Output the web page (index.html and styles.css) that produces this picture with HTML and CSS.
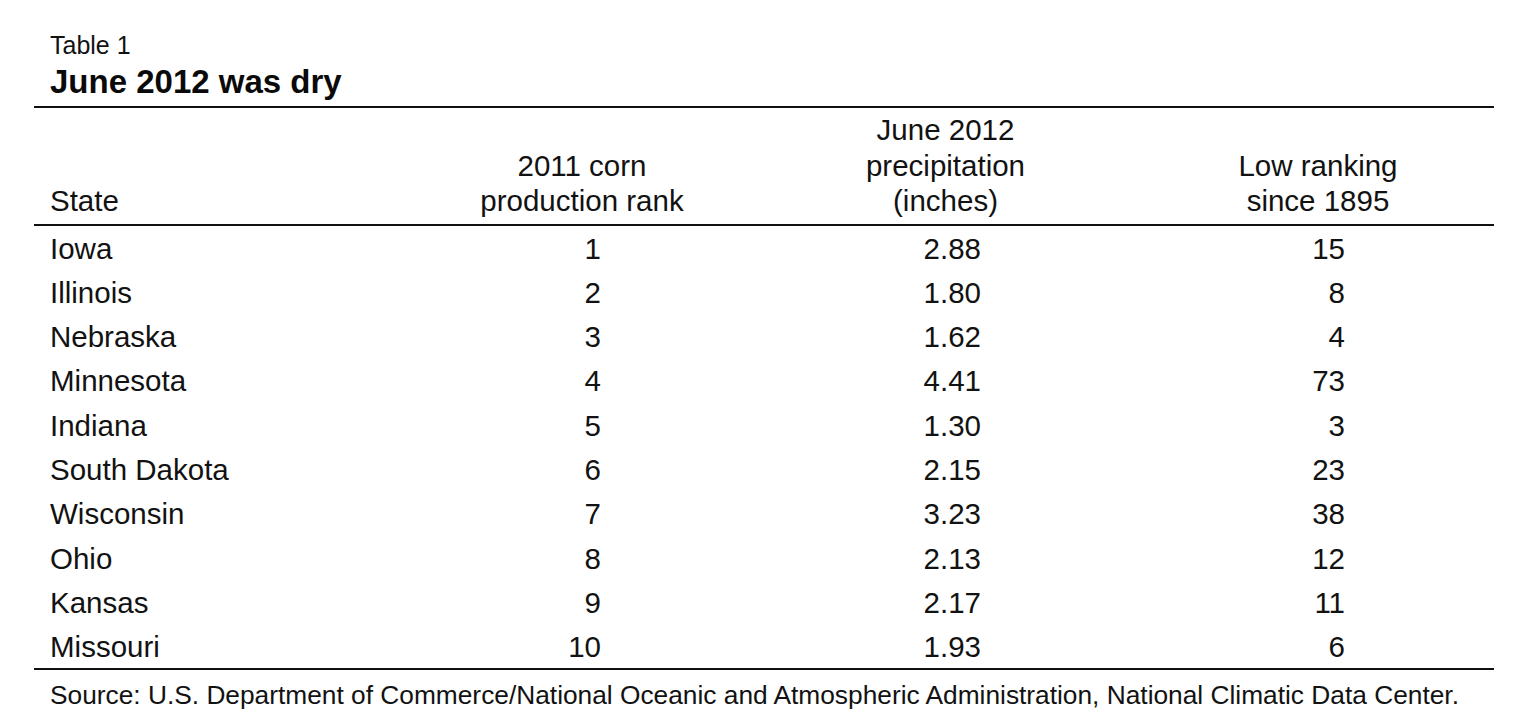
FILE: index.html
```html
<!DOCTYPE html>
<html lang="en">
<head>
<meta charset="utf-8">
<title>Table 1 – June 2012 was dry</title>
<link rel="stylesheet" href="styles.css">
</head>
<body>
<div class="wrap">
  <div class="label">Table 1</div>
  <h1 class="title">June 2012 was dry</h1>
  <table class="data">
    <colgroup>
      <col class="c1"><col class="c2"><col class="c3"><col class="c4">
    </colgroup>
    <thead>
      <tr>
        <th class="state">State</th>
        <th>2011 corn<br>production rank</th>
        <th>June 2012<br>precipitation<br>(inches)</th>
        <th>Low ranking<br>since 1895</th>
      </tr>
    </thead>
    <tbody>
      <tr><td class="state">Iowa</td><td class="n2">1</td><td class="n3">2.88</td><td class="n4">15</td></tr>
      <tr><td class="state">Illinois</td><td class="n2">2</td><td class="n3">1.80</td><td class="n4">8</td></tr>
      <tr><td class="state">Nebraska</td><td class="n2">3</td><td class="n3">1.62</td><td class="n4">4</td></tr>
      <tr><td class="state">Minnesota</td><td class="n2">4</td><td class="n3">4.41</td><td class="n4">73</td></tr>
      <tr><td class="state">Indiana</td><td class="n2">5</td><td class="n3">1.30</td><td class="n4">3</td></tr>
      <tr><td class="state">South Dakota</td><td class="n2">6</td><td class="n3">2.15</td><td class="n4">23</td></tr>
      <tr><td class="state">Wisconsin</td><td class="n2">7</td><td class="n3">3.23</td><td class="n4">38</td></tr>
      <tr><td class="state">Ohio</td><td class="n2">8</td><td class="n3">2.13</td><td class="n4">12</td></tr>
      <tr><td class="state">Kansas</td><td class="n2">9</td><td class="n3">2.17</td><td class="n4">11</td></tr>
      <tr class="last"><td class="state">Missouri</td><td class="n2">10</td><td class="n3">1.93</td><td class="n4">6</td></tr>
    </tbody>
  </table>
  <p class="source">Source: U.S. Department of Commerce/National Oceanic and Atmospheric Administration, National Climatic Data Center.</p>
</div>
</body>
</html>
```

FILE: styles.css
```css
html, body {
  margin: 0;
  padding: 0;
  background: #ffffff;
}

body {
  font-family: "Liberation Sans", Arial, Helvetica, sans-serif;
  color: #121212;
}

.wrap {
  margin-left: 34px;
  width: 1460px;
  padding-top: 31px;
}

.label {
  font-size: 25px;
  line-height: 28px;
  padding-left: 16px;
}

.title {
  margin: 5px 0 0 0;
  font-size: 33px;
  line-height: 36px;
  font-weight: bold;
  padding-left: 16px;
  color: #0a0a0a;
}

.data {
  margin-top: 6px;
  width: 1460px;
  border-collapse: collapse;
  table-layout: fixed;
  font-size: 29.5px;
  border-top: 2px solid #111;
  border-bottom: 2px solid #111;
}

.c1 { width: 381px; }
.c2 { width: 334px; }
.c3 { width: 393px; }
.c4 { width: 352px; }

.data thead th {
  font-weight: normal;
  line-height: 35.5px;
  text-align: center;
  vertical-align: bottom;
  padding: 4px 0 5px 0;
  border-bottom: 2px solid #111;
}

.data th.state,
.data td.state {
  text-align: left;
  padding-left: 16px;
}

.data tbody td {
  line-height: 44.33px;
  padding: 0;
  white-space: nowrap;
}

.data tbody tr:first-child td {
  padding-top: 1px;
}

.data tbody tr.last td {
  line-height: 40.2px;
  padding-top: 2px;
}

.data td.n2 { text-align: right; padding-right: 148px; }
.data td.n3 { text-align: right; padding-right: 161px; }
.data td.n4 { text-align: right; padding-right: 149px; }

.data td.state { padding-left: 16px; }

.source {
  margin: 10px 0 0 0;
  padding-left: 16px;
  font-size: 26.3px;
  line-height: 30px;
  white-space: nowrap;
}
```
